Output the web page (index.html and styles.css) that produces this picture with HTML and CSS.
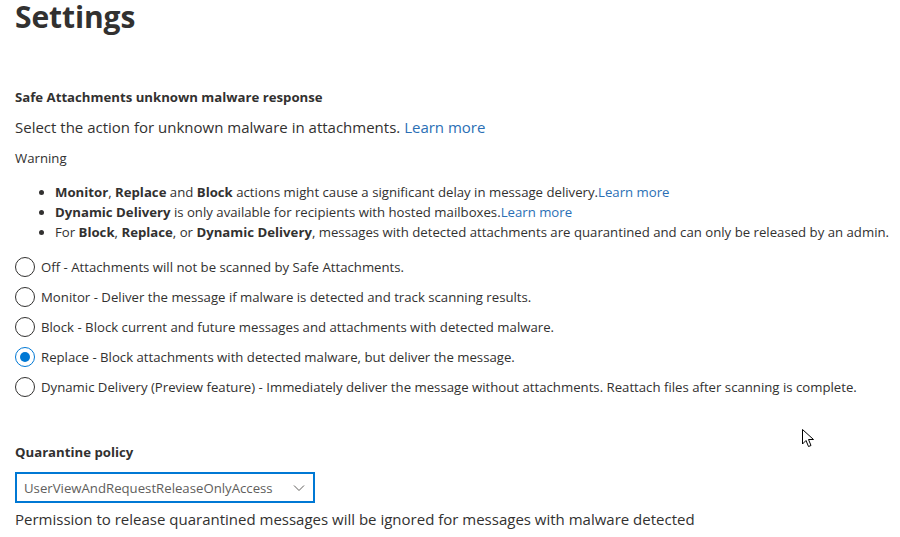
FILE: index.html
```html
<!DOCTYPE html>
<html>
<head>
<meta charset="utf-8">
<link rel="stylesheet" href="styles.css">
</head>
<body>
<main class="page">
  <h1 class="title">Settings</h1>
  <section class="section">
    <h2 class="label">Safe Attachments unknown malware response</h2>
    <p class="lead">Select the action for unknown malware in attachments. <a class="link" href="#">Learn more</a></p>
    <p class="warning">Warning</p>
    <ul class="bullets">
      <li><b>Monitor</b>, <b>Replace</b> and <b>Block</b> actions might cause a significant delay in message delivery.<a class="link" href="#">Learn more</a></li>
      <li><b>Dynamic Delivery</b> is only available for recipients with hosted mailboxes.<a class="link" href="#">Learn more</a></li>
      <li>For <b>Block</b>, <b>Replace</b>, or <b>Dynamic Delivery</b>, messages with detected attachments are quarantined and can only be released by an admin.</li>
    </ul>
    <div class="radios">
      <label class="radio"><span class="circle"></span><span>Off - Attachments will not be scanned by Safe Attachments.</span></label>
      <label class="radio"><span class="circle"></span><span>Monitor - Deliver the message if malware is detected and track scanning results.</span></label>
      <label class="radio"><span class="circle"></span><span>Block - Block current and future messages and attachments with detected malware.</span></label>
      <label class="radio"><span class="circle checked"></span><span>Replace - Block attachments with detected malware, but deliver the message.</span></label>
      <label class="radio"><span class="circle"></span><span>Dynamic Delivery (Preview feature) - Immediately deliver the message without attachments. Reattach files after scanning is complete.</span></label>
    </div>
  </section>
  <section class="section quarantine">
    <h2 class="label">Quarantine policy</h2>
    <div class="dropdown">
      <span class="dropdown-text">UserViewAndRequestReleaseOnlyAccess</span>
      <svg class="chevron" width="12" height="8" viewBox="0 0 12 8"><path d="M1 1.5 L6 6.5 L11 1.5" fill="none" stroke="#605e5c" stroke-width="1"/></svg>
    </div>
    <p class="note">Permission to release quarantined messages will be ignored for messages with malware detected</p>
  </section>
  <svg class="cursor" width="14" height="20" viewBox="0 0 14 20"><path d="M0.5 0.5 L0.5 15 L4 11.5 L6.5 17.5 L9 16.5 L6.5 10.5 L11.5 10.5 Z" fill="#fff" stroke="#000" stroke-width="1"/></svg>
</main>
</body>
</html>
```
FILE: styles.css
```css
* { box-sizing: border-box; }
html, body { margin: 0; padding: 0; background: #fff; }
body {
  font-family: "Open Sans", "Noto Sans", sans-serif;
  color: #323130;
  font-size: 13px;
}
.page {
  position: relative;
  padding: 0 0 0 15px;
  height: 537px;
  overflow: hidden;
}
.title {
  margin: 0;
  font-size: 30px;
  font-weight: 700;
  line-height: 34px;
  letter-spacing: -0.1px;
}
.section { margin-top: 54px; }
.label {
  margin: 0;
  font-size: 13.2px;
  font-weight: 700;
  line-height: 18px;
}
.lead {
  margin: 11px 0 0 0;
  font-size: 15px;
  line-height: 20px;
}
.link { text-decoration: none; color: #2b6fb5; }
.warning {
  margin: 12px 0 0 0;
  font-size: 13.2px;
  line-height: 18px;
}
.bullets {
  margin: 15px 0 0 0;
  padding-left: 40px;
  font-size: 13.2px;
  line-height: 20px;
}
.bullets b { font-weight: 700; }
.radios {
  margin-top: 15px;
  display: flex;
  flex-direction: column;
  gap: 10px;
}
.radio {
  display: flex;
  align-items: center;
  gap: 6px;
  font-size: 13.2px;
  line-height: 20px;
}
.circle {
  width: 20px;
  height: 20px;
  border: 1px solid #323130;
  border-radius: 50%;
  display: flex;
  align-items: center;
  justify-content: center;
  flex: none;
}
.circle.checked { border-color: #0078d4; }
.circle.checked::after {
  content: "";
  width: 10px;
  height: 10px;
  border-radius: 50%;
  background: #0078d4;
}
.quarantine { margin-top: 46px; }
.dropdown {
  margin-top: 11px;
  width: 300px;
  height: 31px;
  border: 2px solid #0078d4;
  display: flex;
  align-items: center;
  justify-content: space-between;
  padding: 0 8px 0 7px;
}
.dropdown-text { font-size: 13.2px; color: #605e5c; }
.note {
  margin: 6px 0 0 0;
  font-size: 15px;
  line-height: 20px;
}
.cursor {
  position: absolute;
  left: 802px;
  top: 429px;
}
```
